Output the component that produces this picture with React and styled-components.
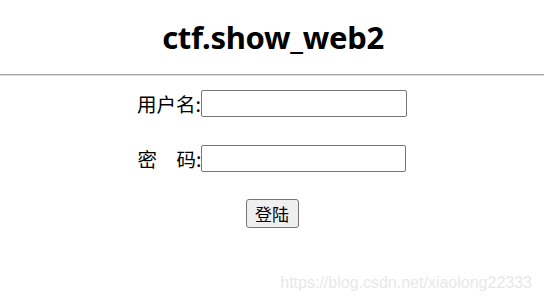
import React from 'react';
import styled, { createGlobalStyle } from 'styled-components';

const GlobalStyle = createGlobalStyle`
    body {
        margin: 0;
        background: #fff;
        font-family: "Liberation Sans", "Noto Sans CJK SC", sans-serif;
        color: #000;
    }
`;

const Page = styled.div`
    position: relative;
    width: 544px;
    height: 301px;
    overflow: hidden;
`;

const Header = styled.header`
    height: 74px;
    display: flex;
    align-items: center;
    justify-content: center;
`;

const Title = styled.h1`
    margin: 0 0 0 2px;
    font-family: "Noto Sans", "Open Sans", sans-serif;
    font-size: 31px;
    font-weight: 700;
    letter-spacing: -0.3px;
`;

const Rule = styled.hr`
    margin: 0;
    height: 0;
    border: none;
    border-top: 1px solid #a0a0a0;
    border-bottom: 1px solid #e0e0e0;
`;

const Form = styled.form`
    display: flex;
    flex-direction: column;
    align-items: center;
    gap: 28px;
    padding-top: 14px;
`;

const Row = styled.div`
    display: flex;
    align-items: center;
    height: 27px;
`;

const Label = styled.label`
    font-family: "Noto Sans CJK SC", sans-serif;
    font-size: 19.5px;
    line-height: 27px;
`;

const Input = styled.input`
    box-sizing: border-box;
    width: ${({ $w }) => $w}px;
    height: 27px;
    margin: 0;
    border: 1px solid #767676;
    border-radius: 2px;
    background: #fff;
`;

const Button = styled.button`
    box-sizing: border-box;
    width: 53px;
    height: 29px;
    margin-top: -1px;
    padding: 0;
    border: 1px solid #767676;
    border-radius: 3px;
    background: #efefef;
    font-family: "Noto Sans CJK SC", sans-serif;
    font-size: 17px;
    color: #000;
`;

const Watermark = styled.div`
    position: absolute;
    right: 12px;
    bottom: 9px;
    font-family: "Liberation Sans", sans-serif;
    font-size: 16px;
    color: #e8e8e8;
`;

export default function App() {
    return (
        <Page>
            <GlobalStyle />
            <Header>
                <Title>ctf.show_web2</Title>
            </Header>
            <Rule />
            <Form onSubmit={e => e.preventDefault()}>
                <Row>
                    <Label>用户名:</Label>
                    <Input type="text" $w={206} />
                </Row>
                <Row>
                    <Label>密　码:</Label>
                    <Input type="password" $w={205} />
                </Row>
                <Button type="submit">登陆</Button>
            </Form>
            <Watermark>https://blog.csdn.net/xiaolong22333</Watermark>
        </Page>
    );
}
